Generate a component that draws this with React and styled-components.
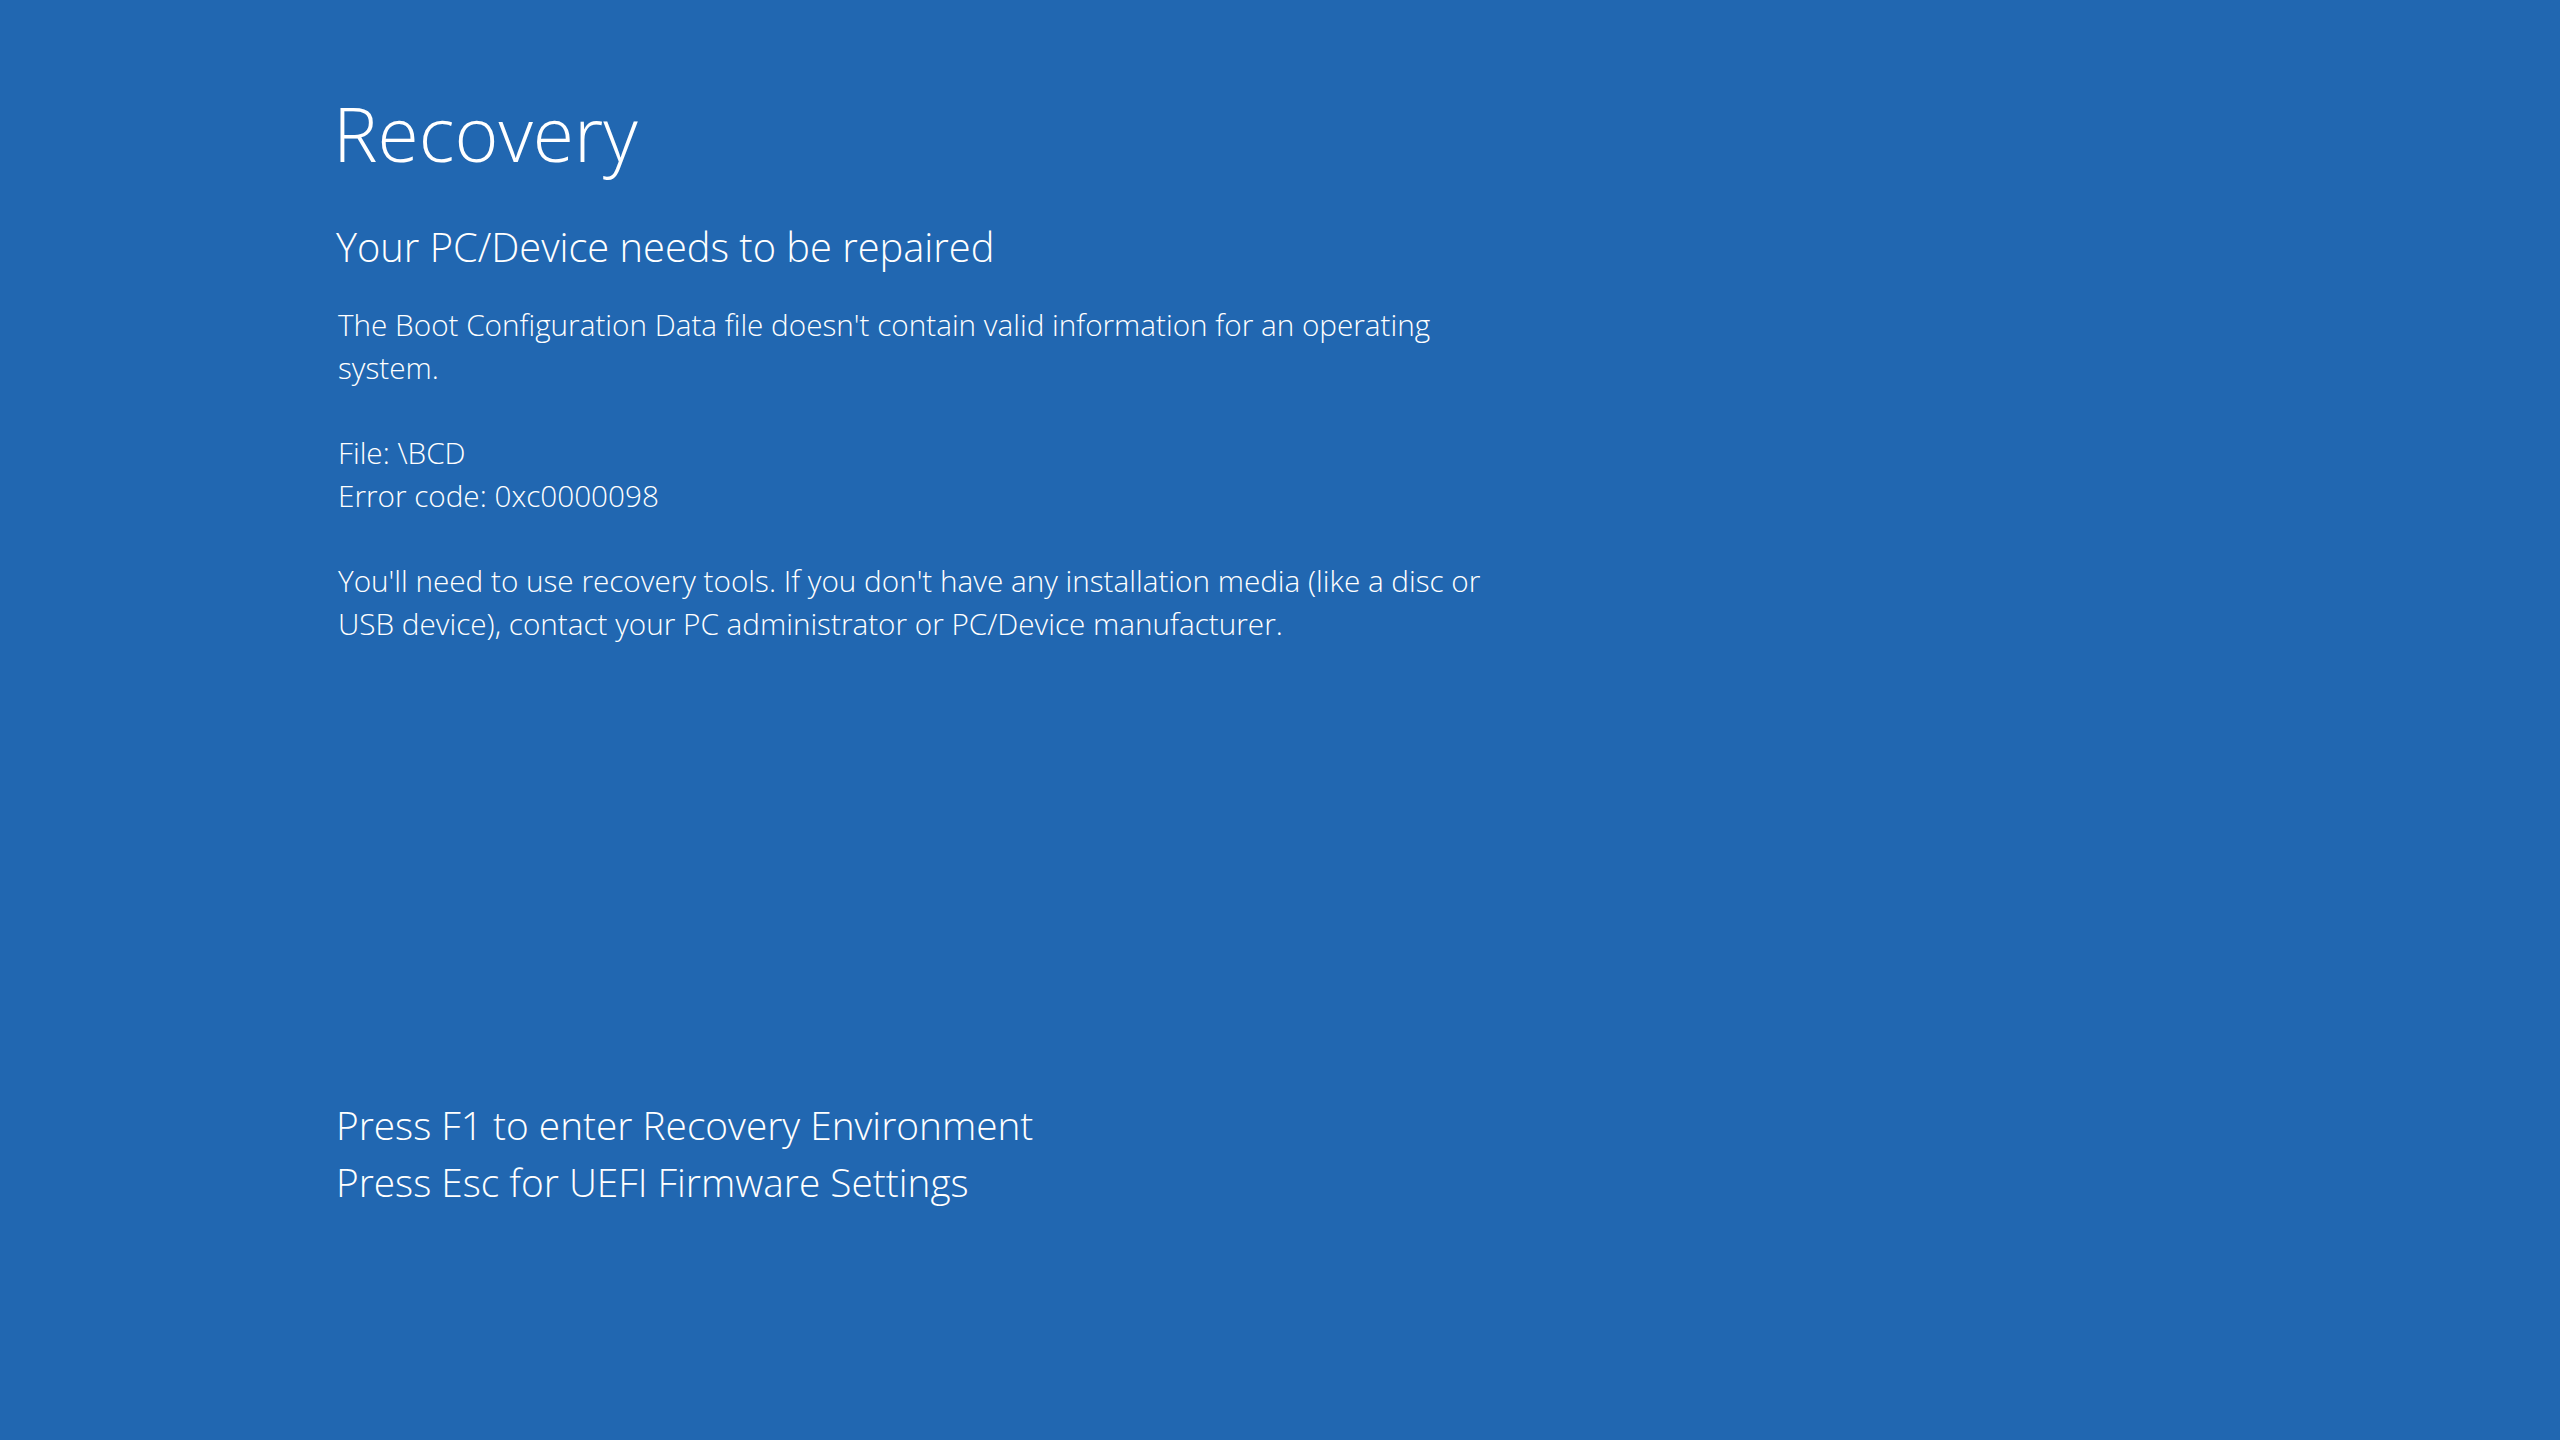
import React from "react";
import styled, { createGlobalStyle } from "styled-components";

const GlobalStyle = createGlobalStyle`
	html, body {
		margin: 0;
		padding: 0;
		background: #2167b1;
	}
	* {
		box-sizing: border-box;
	}
`;

const Screen = styled.main`
	background: #2167b1; // recovery blue
	color: #ffffff;
	display: flex;
	flex-direction: column;
	font-family: "Open Sans", "Noto Sans", sans-serif;
	height: 100vh;
	padding: 85px 0 0 333px;
	width: 100vw;
`;

const Title = styled.h1`
	font-size: 75px;
	font-weight: 300;
	line-height: 96px;
	margin: 0;
`;

const Subtitle = styled.h2`
	font-size: 39.8px;
	font-weight: 300;
	line-height: 56px;
	margin: 38px 0 0 3px;
`;

const Body = styled.div`
	display: flex;
	flex-direction: column;
	gap: 43px;
	margin: 29px 0 0 5px;
	width: 1240px;
`;

const Para = styled.p`
	font-size: 29.7px;
	font-weight: 300;
	line-height: 42.5px;
	margin: 0;
`;

const Prompts = styled.div`
	display: flex;
	flex-direction: column;
	margin: 452px 0 0 3px;
`;

const Prompt = styled.div`
	font-size: 38.8px;
	font-weight: 300;
	line-height: 57px;
`;

const App = () => {
	return (
		<>
			<GlobalStyle />
			<Screen>
				<Title>Recovery</Title>
				<Subtitle>Your PC/Device needs to be repaired</Subtitle>
				<Body>
					<Para>
						The Boot Configuration Data file doesn't contain valid information for an operating
						<br />
						system.
					</Para>
					<Para>
						File: \BCD
						<br />
						Error code: 0xc0000098
					</Para>
					<Para>
						You'll need to use recovery tools. If you don't have any installation media (like a disc or
						<br />
						USB device), contact your PC administrator or PC/Device manufacturer.
					</Para>
				</Body>
				<Prompts>
					<Prompt>Press F1 to enter Recovery Environment</Prompt>
					<Prompt>Press Esc for UEFI Firmware Settings</Prompt>
				</Prompts>
			</Screen>
		</>
	);
};

export default App;
